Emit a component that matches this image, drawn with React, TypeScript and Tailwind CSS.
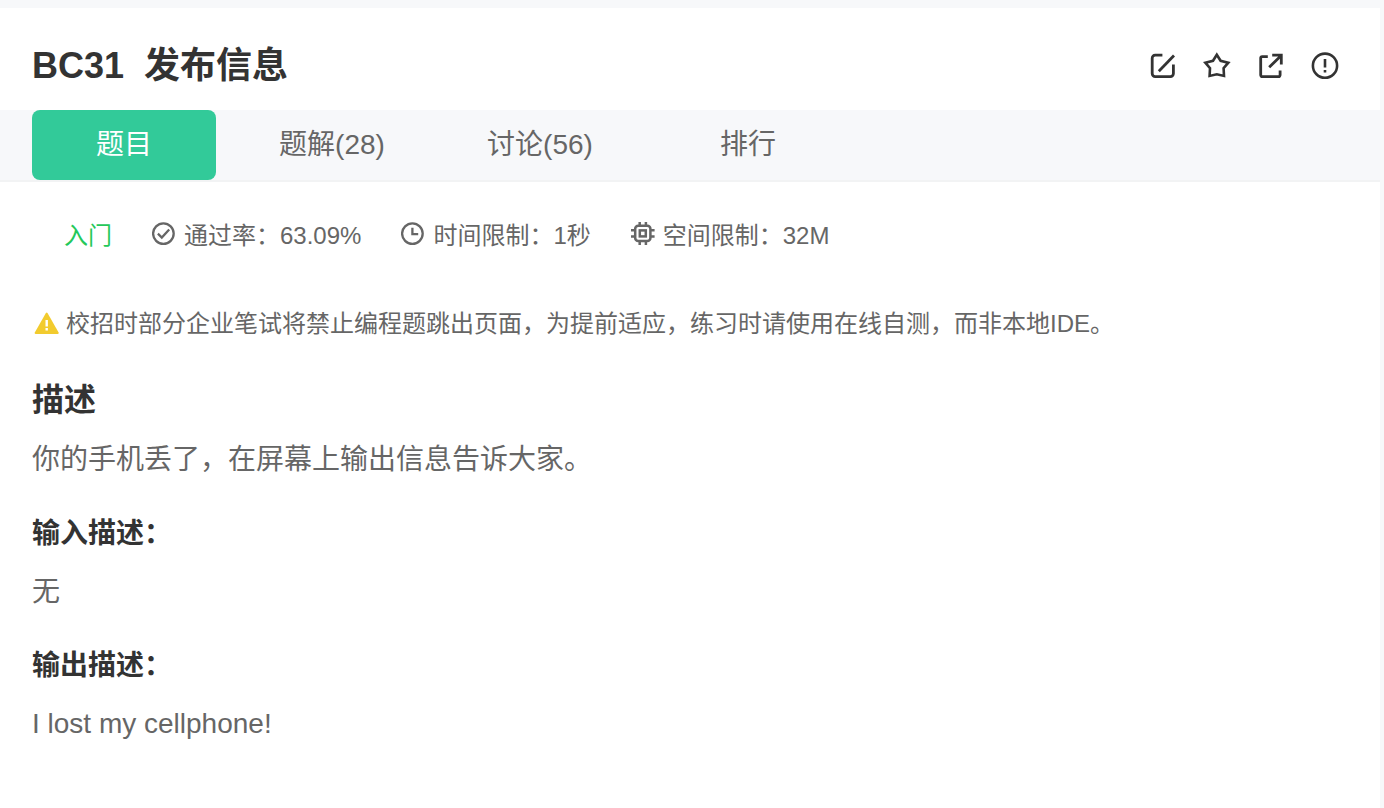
import React from 'react';

interface Tab {
  label: string;
  active?: boolean;
}

interface Section {
  title: string;
  body: string;
}

const tabs: Tab[] = [
  { label: '题目', active: true },
  { label: '题解(28)' },
  { label: '讨论(56)' },
  { label: '排行' },
];

const sections: Section[] = [
  { title: '输入描述：', body: '无' },
  { title: '输出描述：', body: 'I lost my cellphone!' },
];

function EditIcon() {
  return (
    <svg viewBox="0 0 28 28" className="w-7 h-7" fill="none" stroke="currentColor" strokeWidth="2.8">
      <path d="M13.4 3.2H6.2a3 3 0 0 0-3 3v15.4a3 3 0 0 0 3 3h15.2a3 3 0 0 0 3-3V12.6" />
      <path d="M25 3.6 9.8 19.2" />
    </svg>
  );
}

function StarIcon() {
  return (
    <svg viewBox="0 0 28 28" className="w-7 h-7" fill="none" stroke="currentColor" strokeWidth="2.6">
      <path d="M13.8 2.8 17.6 8.8 25.3 10.7 20.6 16.2 21 23.9 13.8 22.3 6.6 23.9 7 16.2 2.3 10.7 10 8.8Z" />
    </svg>
  );
}

function ShareIcon() {
  return (
    <svg viewBox="0 0 28 28" className="w-7 h-7" fill="none" stroke="currentColor" strokeWidth="2.8">
      <path d="M10.8 4.6H5.2a1.5 1.5 0 0 0-1.5 1.5v17a1.5 1.5 0 0 0 1.5 1.5h16.4a1.5 1.5 0 0 0 1.5-1.5v-4.6" />
      <path d="M15.2 3.2h9.1v9.4M24.2 3.4 12.2 15.2" />
    </svg>
  );
}

function AlertIcon() {
  return (
    <svg viewBox="0 0 28 28" className="w-7 h-7" fill="none" stroke="currentColor" strokeWidth="2.6">
      <circle cx="14" cy="13.7" r="12.1" />
      <path d="M14 7v8.4M14 18v2.6" />
    </svg>
  );
}

function CheckIcon() {
  return (
    <svg viewBox="0 0 24 24" className="w-6 h-6 mb-1" fill="none" stroke="currentColor" strokeWidth="2.3">
      <circle cx="11.4" cy="11.6" r="10.3" />
      <path d="m5.9 11.6 3.9 3.9 7.4-8" />
    </svg>
  );
}

function ClockIcon() {
  return (
    <svg viewBox="0 0 24 24" className="w-6 h-6 mb-1" fill="none" stroke="currentColor" strokeWidth="2.3">
      <circle cx="11.4" cy="11.6" r="10.3" />
      <path d="M11.4 5.8v6.4h5.8" />
    </svg>
  );
}

function ChipIcon() {
  return (
    <svg viewBox="0 0 24 24" className="w-6 h-6 mb-1" fill="none" stroke="currentColor" strokeWidth="2.5">
      <rect x="4.2" y="3.8" width="15.2" height="15.2" rx="3" />
      <rect x="8.8" y="8.4" width="6" height="6" />
      <path d="M8.7 0v4M14.9 0v4M8.7 19v4M14.9 19v4M0 8.3h4M0 14.5h4M19.6 8.3h4M19.6 14.5h4" />
    </svg>
  );
}

function WarningIcon() {
  return (
    <svg viewBox="0 0 28 28" className="w-7 h-7" aria-hidden="true">
      <path d="M13.9 3a1 1 0 0 1 1.6 0l11.1 19.6a.9.9 0 0 1-.8 1.3H3.6a.9.9 0 0 1-.8-1.3Z" fill="#f2cb2e" />
      <path d="M14.7 10v6.4M14.7 18v2.4" stroke="#fff" strokeWidth="2.4" />
    </svg>
  );
}

const actions = [
  { name: '笔记', icon: EditIcon },
  { name: '收藏', icon: StarIcon },
  { name: '分享', icon: ShareIcon },
  { name: '反馈', icon: AlertIcon },
];

const limits = [
  { text: '通过率：63.09%', icon: CheckIcon },
  { text: '时间限制：1秒', icon: ClockIcon },
  { text: '空间限制：32M', icon: ChipIcon },
];

export default function App() {
  return (
    <div className="min-h-screen flex flex-col bg-[#f7f8fa] pt-2 pr-1 text-[#666] font-['Liberation_Sans','Noto_Sans_CJK_SC',sans-serif]">
      <main className="flex-1 bg-white">
        <header className="flex items-center justify-between pt-8 pb-[18px] pl-8 pr-[41px] text-[#333]">
          <h1 className="flex gap-5 text-4xl leading-[52px] font-bold">
            <span>BC31</span>
            <span>发布信息</span>
          </h1>
          <div className="flex gap-[26px]">
            {actions.map(({ name, icon: Icon }) => (
              <button key={name} type="button" aria-label={name}>
                <Icon />
              </button>
            ))}
          </div>
        </header>

        <nav className="flex gap-6 px-8 bg-[#f7f8fa] border-b-2 border-[#f2f3f4]">
          {tabs.map((tab) => (
            <button
              key={tab.label}
              type="button"
              className={`w-[184px] h-[70px] rounded-lg text-[28px] ${
                tab.active ? 'bg-[#32ca99] text-white' : ''
              }`}
            >
              {tab.label}
            </button>
          ))}
        </nav>

        <div className="px-8 pt-9">
          {/* Difficulty and limits */}
          <div className="flex flex-wrap gap-x-10 pl-8 text-2xl leading-9">
            <span className="text-[#25c85a]">入门</span>
            {limits.map(({ text, icon: Icon }) => (
              <span key={text} className="flex items-center gap-2">
                <Icon />
                {text}
              </span>
            ))}
          </div>

          <p className="flex items-center gap-1.5 mt-13 text-2xl leading-9">
            <WarningIcon />
            校招时部分企业笔试将禁止编程题跳出页面，为提前适应，练习时请使用在线自测，而非本地IDE。
          </p>

          <h2 className="mt-9 text-[32px] leading-11 font-bold text-[#333]">描述</h2>
          <p className="mt-4 text-[28px] leading-11">你的手机丢了，在屏幕上输出信息告诉大家。</p>

          {sections.map((section) => (
            <section key={section.title} className="mt-8">
              <h3 className="text-[28px] leading-10 font-bold text-[#333]">{section.title}</h3>
              <p className="mt-4 text-[28px] leading-11">{section.body}</p>
            </section>
          ))}
        </div>
      </main>
    </div>
  );
}
